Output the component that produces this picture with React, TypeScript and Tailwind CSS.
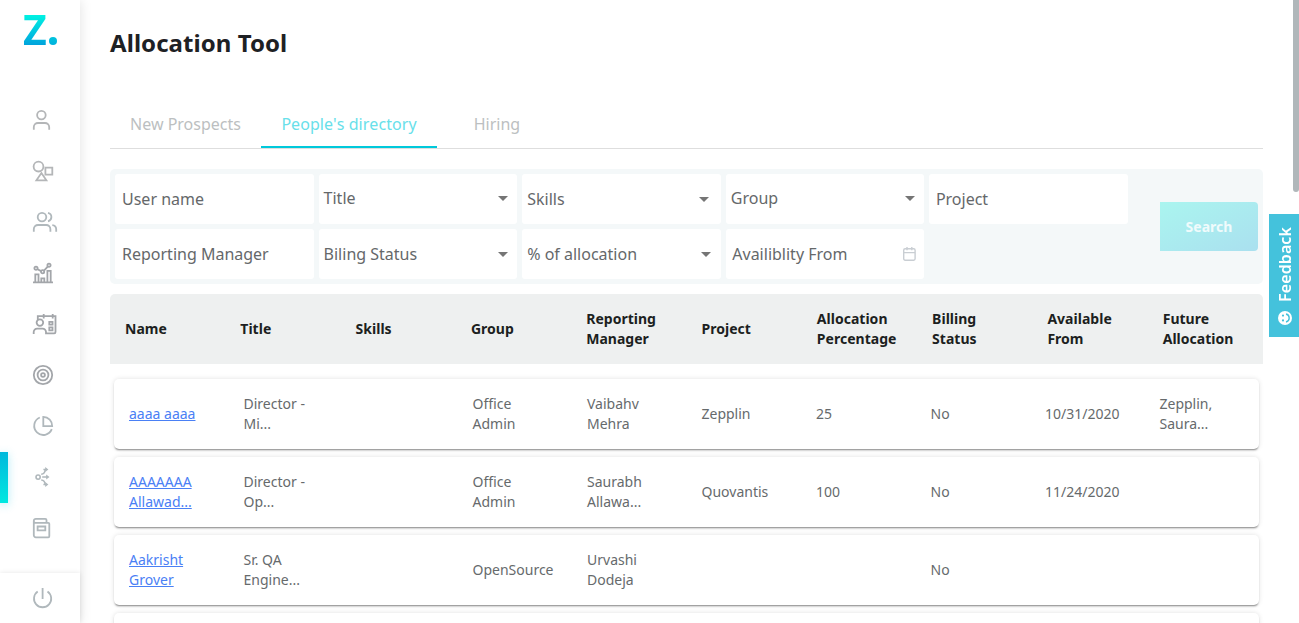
import React from "react";

const iconPaths: { name: string; color: string; art: React.ReactNode }[] = [
  {
    name: "profile",
    color: "text-[#b4b6b8]",
    art: (
      <>
        <circle cx="8.4" cy="5.1" r="4.3" />
        <path d="M.8 19.8V17.2a4.2 4.2 0 0 1 4.2-4.2h7a4.2 4.2 0 0 1 4.2 4.2v2.6" />
      </>
    ),
  },
  {
    name: "shapes",
    color: "text-[#b4b6b8]",
    art: (
      <>
        <circle cx="5.5" cy="5.6" r="4.9" />
        <path d="M12.4 6.7h6.9v6.9h-6.9zM8.4 12l5 7.3H3.4z" />
      </>
    ),
  },
  {
    name: "people",
    color: "text-[#b0b8bc]",
    art: (
      <>
        <circle cx="9" cy="5.1" r="4.3" />
        <path d="M.8 19.8V17.2A4.2 4.2 0 0 1 5 13h8.2a4.2 4.2 0 0 1 4.2 4.2v2.6M15 .9a4.3 4.3 0 0 1 0 8.4M19.3 13.1a4.2 4.2 0 0 1 3.9 4.1v2.6" />
      </>
    ),
  },
  {
    name: "reports",
    color: "text-[#a3a6aa]",
    art: (
      <>
        <path d="M0 19.3h20M2.3 19V11.4h3.2V19M8.3 19v-3.6h3V19M14.4 19V7.9h3.3V19M4.5 6.2l3.7 1.9M11 7.6l3.7-4" />
        <circle cx="3" cy="5.2" r="1.6" />
        <circle cx="9.6" cy="8.8" r="1.6" />
        <circle cx="16" cy="2.2" r="1.6" />
      </>
    ),
  },
  {
    name: "schedule",
    color: "text-[#a3a6aa]",
    art: (
      <>
        <circle cx="6.9" cy="8.6" r="3.3" />
        <path d="M.7 20v-2a3.4 3.4 0 0 1 3.4-3.4H9.6A3.4 3.4 0 0 1 13 18v1.3h8.2a1.3 1.3 0 0 0 1.3-1.3V2.2H4.8v4M10.7 0v4.6M19.7 0v4.6M16.3 7.8h3.2v2.9h-3.2zM16.3 13.4h3.2v2.9h-3.2z" />
      </>
    ),
  },
  {
    name: "goals",
    color: "text-[#a3a6aa]",
    art: (
      <>
        <circle cx="10" cy="10" r="9.2" />
        <circle cx="10" cy="10" r="5.4" />
        <circle cx="10" cy="10" r="1.9" />
      </>
    ),
  },
  {
    name: "analytics",
    color: "text-[#b0b8bc]",
    art: (
      <path d="M10.3.9v9.3h8.9A9 9 0 0 0 10.3.9zM6.8 1.5A9.1 9.1 0 1 0 18.8 13.2" />
    ),
  },
  {
    name: "allocation",
    color: "text-[#b0b8bc]",
    art: (
      <>
        <circle cx="5.1" cy="10.1" r="2.1" strokeWidth="1.6" />
        <path
          strokeWidth="1.5"
          d="M9.2 10.1h5M8.2 7.2c2.4-.2 3.8-1.6 3.9-4.5M8.2 13c2.4.2 3.8 1.6 3.9 4.5M10.4 2.6h2.6M10.4 17.6h2.6"
        />
        <path
          fill="currentColor"
          stroke="none"
          d="M13.2 7.6l3.3 2.5-3.3 2.5zM12.2.1l3.2 2.5-3.2 2.5zM12.2 15.1l3.2 2.5-3.2 2.5z"
        />
      </>
    ),
  },
  {
    name: "library",
    color: "text-[#b0b8bc]",
    art: (
      <path d="M.8 3v14.3a2 2 0 0 0 2 2h12.5a1 1 0 0 0 1-1V5.8a1 1 0 0 0-1-1H2.8A1.9 1.9 0 0 1 .8 3 2.1 2.1 0 0 1 2.9.8h9.3a1.3 1.3 0 0 1 1.3 1.3v2.7M4.6 8.5h7.7v3.8H4.6z" />
    ),
  },
];

function Icon({ children }: { children: React.ReactNode }) {
  return (
    <svg
      width="24"
      height="20"
      viewBox="0 0 24 20"
      fill="none"
      stroke="currentColor"
      strokeWidth="1.8"
      className="overflow-visible"
    >
      {children}
    </svg>
  );
}

function Sidebar() {
  return (
    <aside className="relative z-10 flex h-full w-20 shrink-0 flex-col bg-white shadow-[0_0_12px_rgba(0,0,0,0.12)]">
      <div className="flex h-[95px] items-start pl-[23px]">
        <span className="mt-[8.5px] block h-10 bg-linear-to-b from-[#00f2e2] from-15% to-[#00a3dc] to-90% bg-clip-text text-[41px] leading-[40px] font-bold text-transparent">
          Z
        </span>
        <span className="mt-[37px] ml-[2px] h-2 w-2 rounded-full bg-linear-to-b from-[#00c4de] to-[#00b0dd]" />
      </div>
      <nav className="flex flex-1 flex-col">
        {iconPaths.map((icon) => (
          <a key={icon.name} className={`flex h-[51px] ${icon.color}`}>
            <span
              className={
                icon.name === "allocation"
                  ? "h-full w-2 bg-linear-to-b from-[#00b8dc] to-[#00e8e0] shadow-[0_2px_10px_rgba(0,190,225,0.3)]"
                  : "h-full w-2"
              }
            />
            <span className="mt-[15px] ml-[25px] flex h-5">
              <Icon>{icon.art}</Icon>
            </span>
          </a>
        ))}
      </nav>
      <div className="flex h-[50px] items-center pl-[33px] text-[#b0b8bc] shadow-[0_0_5px_rgba(0,0,0,0.1)]">
        <Icon>
          <path d="M9.6 0v11M4.7 3.6a8.6 8.6 0 1 0 9.8 0" />
        </Icon>
      </div>
    </aside>
  );
}

function Caret() {
  return (
    <svg width="10" height="5" viewBox="0 0 10 5" className="ml-auto shrink-0" fill="#757575">
      <path d="M0 0h10L5 5z" />
    </svg>
  );
}

const fields = [
  { label: "User name", style: "pl-[7px]" },
  { label: "Title", style: "pl-[5px] pr-[9px] pb-[2px]", caret: true },
  { label: "Skills", style: "pl-[5px] pr-3", caret: true },
  { label: "Group", style: "pl-[5px] pr-[9px] pb-[2px]", caret: true },
  { label: "Project", style: "pl-[6.5px]" },
  { label: "Reporting Manager", style: "pl-[7px]" },
  { label: "Biling Status", style: "pl-[5px] pr-[9px]", caret: true },
  { label: "% of allocation", style: "pl-[5px] pr-[10px]", caret: true },
  { label: "Availiblity From", style: "pl-[6.5px] pr-2", calendar: true },
];

function Filters() {
  return (
    <section className="mt-5 flex h-[115px] items-center justify-between rounded-[5px] bg-[#f4f8f9] p-[5px]">
      <div className="grid w-[1013px] grid-cols-5 gap-[5px]">
        {fields.map((f) => (
          <div
            key={f.label}
            className={`flex h-[50px] items-center rounded-[3px] bg-white text-base text-[#65686a] ${f.style}`}
          >
            {f.label}
            {f.caret && <Caret />}
            {f.calendar && (
              <svg width="13" height="14" viewBox="0 0 13 14" fill="none" stroke="#c9ced3" strokeWidth="1.4" className="ml-auto">
                <rect x=".7" y="1.8" width="11.4" height="11.4" rx="1.4" />
                <path d="M.7 5.6h11.4M4 0v3.2M8.8 0v3.2" />
              </svg>
            )}
          </div>
        ))}
      </div>
      <button className="h-[49px] w-[98px] rounded-r-[4px] bg-linear-to-br from-[#aaf5ef] to-[#aae0ef] text-sm font-bold text-[#f0fbfc]">
        Search
      </button>
    </section>
  );
}

const columns = [
  "Name",
  "Title",
  "Skills",
  "Group",
  "Reporting Manager",
  "Project",
  "Allocation Percentage",
  "Billing Status",
  "Available From",
  "Future Allocation",
];

const rows = [
  [["aaaa aaaa"], ["Director -", "Mi..."], [], ["Office", "Admin"], ["Vaibahv", "Mehra"], ["Zepplin"], ["25"], ["No"], ["10/31/2020"], ["Zepplin,", "Saura..."]],
  [["AAAAAAA", "Allawad..."], ["Director -", "Op..."], [], ["Office", "Admin"], ["Saurabh", "Allawa..."], ["Quovantis"], ["100"], ["No"], ["11/24/2020"], []],
  [["Aakrisht", "Grover"], ["Sr. QA", "Engine..."], [], ["OpenSource"], ["Urvashi", "Dodeja"], [], [], ["No"], [], []],
  [[], [], [], [], [], [], [], [], [], []],
];

function People() {
  return (
    <section className="mt-[10px] text-sm leading-5">
      <div className="grid h-[70px] grid-cols-10 items-center rounded-t-[5px] bg-[#eef0f0] font-bold tracking-[0.02px] text-[#1c1f21]">
        {columns.map((c) => (
          <div key={c} className="pr-4 pl-[15px]">
            {c}
          </div>
        ))}
      </div>
      <div className="flex flex-col gap-2 px-1 pt-[15px]">
        {rows.map((row, i) => (
          <div
            key={i}
            className="grid h-[70px] grid-cols-10 items-center rounded-[5px] bg-white text-[#666a6c] shadow-[0_2px_2px_-1px_rgba(0,0,0,0.45),0_0_5px_rgba(0,0,0,0.12)]"
          >
            {row.map((cell, j) => (
              <div
                key={j}
                className={j === 0 ? "pl-[15px] text-[#4a80f5] underline" : "pl-[15px]"}
              >
                {cell.map((line) => (
                  <div key={line}>{line}</div>
                ))}
              </div>
            ))}
          </div>
        ))}
      </div>
    </section>
  );
}

export default function App() {
  return (
    <div className="relative flex h-[623px] w-[1299px] overflow-hidden bg-white font-['Noto_Sans',sans-serif]">
      <Sidebar />
      <main className="w-[1183px] shrink-0 pl-[30px]">
        <h1 className="pt-[27px] text-2xl leading-8 font-bold tracking-[0.06px] text-[#1e2124]">
          Allocation Tool
        </h1>
        <div className="mt-[42px] flex h-12 border-b border-[#dedede] text-base text-[#bcbfc1]">
          <div className="flex h-[47px] w-[151px] items-center justify-center pb-[2px]">New Prospects</div>
          <div className="flex h-[47px] w-[176px] items-center justify-center border-b-2 border-[#00c9db] tracking-[0.05px] text-[#68e0ea] [font-kerning:none]">
            People's directory
          </div>
          <div className="flex h-[47px] w-[120px] items-center justify-center pb-[2px]">Hiring</div>
        </div>
        <Filters />
        <People />
      </main>
      <div className="absolute top-0 right-0 h-[192px] w-[6px] rounded-b-[3px] bg-[#b0b7ba]" />
      <div className="absolute top-[214px] right-0 flex h-[123px] w-[30px] flex-col items-center justify-between bg-[#44c2dc] pt-[13px] pb-[12px] pl-[2px] text-white">
        <span className="rotate-180 text-base leading-[30px] font-semibold tracking-[0.1px] [writing-mode:vertical-rl]">
          Feedback
        </span>
        <svg width="14" height="14" viewBox="0 0 14 14" className="-rotate-90">
          <circle cx="7" cy="7" r="7" fill="#fff" />
          <circle cx="4.6" cy="5" r="1.1" fill="#44c2dc" />
          <circle cx="9.4" cy="5" r="1.1" fill="#44c2dc" />
          <path d="M3 8a4.1 4.1 0 0 0 8 0" fill="none" stroke="#44c2dc" strokeWidth="1.4" />
        </svg>
      </div>
    </div>
  );
}
